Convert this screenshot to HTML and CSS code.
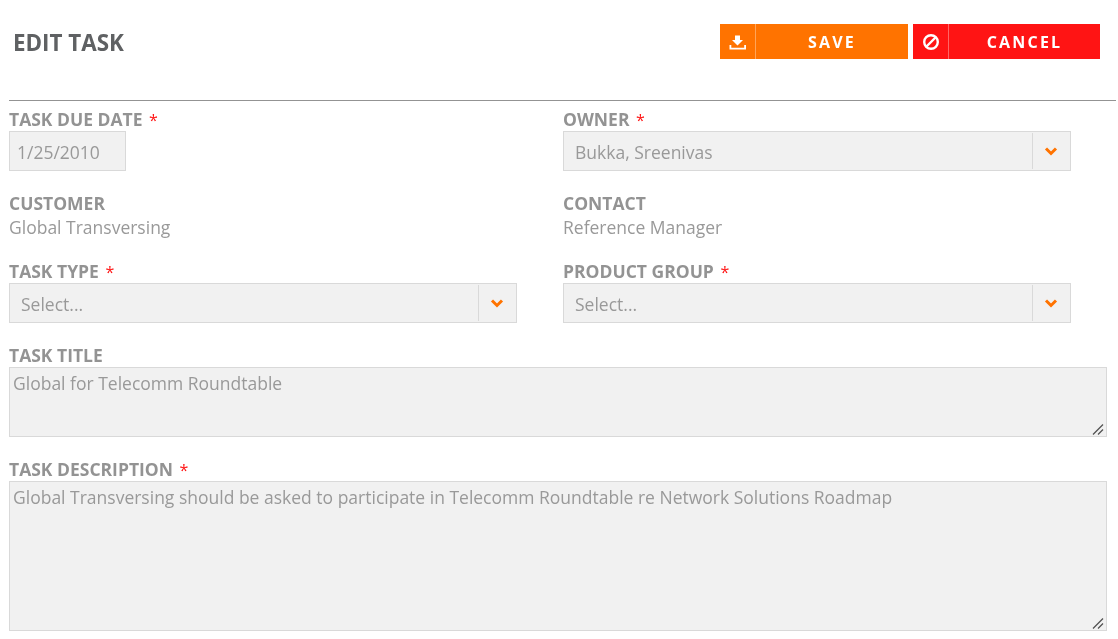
FILE: index.html
```html
<!DOCTYPE html>
<html lang="en">
<head>
<meta charset="utf-8">
<title>Edit Task</title>
<link rel="stylesheet" href="styles.css">
</head>
<body>
<div class="page">
  <header class="header">
    <h1 class="title">EDIT TASK</h1>
    <div class="actions">
      <button class="btn btn-save" type="button">
        <span class="btn-icon"><svg width="18" height="18" viewBox="0 0 18 18"><path d="M6 2.500h5v4.500h3L8.500 12.500 3 7h3z" fill="#fff"/><path d="M.5 12v4.500h16.500V12h-1.800v2.700H2.300V12z" fill="#fff"/></svg></span>
        <span class="btn-text">SAVE</span>
      </button>
      <button class="btn btn-cancel" type="button">
        <span class="btn-icon"><svg width="18" height="18" viewBox="0 0 18 18"><circle cx="9" cy="9" r="6.800" fill="none" stroke="#fff" stroke-width="2.400"/><path d="M4.500 13.500l9-9" stroke="#fff" stroke-width="2.400"/></svg></span>
        <span class="btn-text">CANCEL</span>
      </button>
    </div>
  </header>
  <form class="form">
    <div class="row">
      <div class="field">
        <label class="label">TASK DUE DATE <span class="req">*</span></label>
        <input class="input date" type="text" value="1/25/2010" readonly>
      </div>
      <div class="field">
        <label class="label">OWNER <span class="req">*</span></label>
        <div class="select"><span class="select-value">Bukka, Sreenivas</span><span class="select-arrow"><svg width="14" height="10" viewBox="0 0 14 10"><path d="M2 2.500l5 5 5-5" fill="none" stroke="#ff7300" stroke-width="3"/></svg></span></div>
      </div>
    </div>
    <div class="row row-next">
      <div class="field">
        <div class="label">CUSTOMER</div>
        <div class="value">Global Transversing</div>
      </div>
      <div class="field">
        <div class="label">CONTACT</div>
        <div class="value">Reference Manager</div>
      </div>
    </div>
    <div class="row row-next">
      <div class="field">
        <label class="label">TASK TYPE <span class="req">*</span></label>
        <div class="select"><span class="select-value">Select...</span><span class="select-arrow"><svg width="14" height="10" viewBox="0 0 14 10"><path d="M2 2.500l5 5 5-5" fill="none" stroke="#ff7300" stroke-width="3"/></svg></span></div>
      </div>
      <div class="field">
        <label class="label">PRODUCT GROUP <span class="req">*</span></label>
        <div class="select"><span class="select-value">Select...</span><span class="select-arrow"><svg width="14" height="10" viewBox="0 0 14 10"><path d="M2 2.500l5 5 5-5" fill="none" stroke="#ff7300" stroke-width="3"/></svg></span></div>
      </div>
    </div>
    <div class="block">
      <label class="label">TASK TITLE</label>
      <div class="area-wrap">
        <textarea class="area area-title" readonly>Global for Telecomm Roundtable</textarea>
        <svg class="grip" width="12" height="12" viewBox="0 0 12 12"><path d="M1 11.500L11 1.500M6 11.500l5-5" fill="none" stroke="#555" stroke-width="1.300"/></svg>
      </div>
    </div>
    <div class="block">
      <label class="label">TASK DESCRIPTION <span class="req">*</span></label>
      <div class="area-wrap">
        <textarea class="area area-desc" readonly>Global Transversing should be asked to participate in Telecomm Roundtable re Network Solutions Roadmap</textarea>
        <svg class="grip" width="12" height="12" viewBox="0 0 12 12"><path d="M1 11.500L11 1.500M6 11.500l5-5" fill="none" stroke="#555" stroke-width="1.300"/></svg>
      </div>
    </div>
  </form>
</div>
</body>
</html>
```
FILE: styles.css
```css
* { box-sizing: border-box; }
html, body { margin: 0; padding: 0; background: #fff; overflow: hidden; }
body { font-family: "Open Sans", sans-serif; color: #999; }
.page { padding-left: 9px; width: 1116px; will-change: transform; }
.header {
  height: 101px;
  border-bottom: 1px solid #939393;
  display: flex;
  justify-content: space-between;
  align-items: flex-start;
  padding: 24px 16px 0 4px;
}
.title { margin: 0; font-size: 22.4px; line-height: 38px; font-weight: 700; color: #5f6163; }
.actions { display: flex; gap: 5px; }
.btn {
  display: flex; align-items: stretch; height: 35px; padding: 0; border: 0;
  color: #fff; font-family: inherit; font-weight: 700; font-size: 16px; letter-spacing: 2.2px;
}
.btn-save { width: 188px; background: #ff7300; }
.btn-cancel { width: 187px; background: #ff1414; }
.btn-icon {
  width: 36px; flex: none; display: flex; align-items: center; justify-content: center;
  border-right: 1px solid rgba(255,255,255,.35);
}
.btn-text { flex: 1; line-height: 37px; text-align: center; }
.label { display: block; font-size: 17.5px; line-height: 23px; font-weight: 700; color: #939393; }
.req { color: #ff1414; font-size: 16px; line-height: 0; font-weight: 400; margin-left: 2px; }
.row { display: grid; grid-template-columns: 554px 508px; padding-top: 7px; }
.row-next { padding-top: 21px; }
.input, .select, .area {
  background: #f1f1f1; border: 1px solid #d9d9d9; color: #999;
  font-family: inherit; font-size: 17.5px;
}
.input.date { display: block; width: 117px; height: 40px; padding: 2px 7px 0; outline: 0; }
.select { width: 508px; height: 40px; display: flex; align-items: center; }
.select-value { flex: 1; padding: 2px 0 0 11px; }
.select-arrow {
  width: 38px; height: 36px; flex: none; display: flex; align-items: center; justify-content: center;
  border-left: 1px solid #d9d9d9; padding-right: 2px;
}
.value { font-size: 17.5px; line-height: 24px; color: #999; }
.block { width: 1098px; padding-top: 21px; }
.area-wrap { position: relative; }
.area { display: block; width: 100%; padding: 3px; line-height: 24px; outline: 0; resize: none; margin: 0; }
.area-title { height: 70px; }
.area-desc { height: 150px; }
.grip { position: absolute; right: 3px; bottom: 2px; }
```
